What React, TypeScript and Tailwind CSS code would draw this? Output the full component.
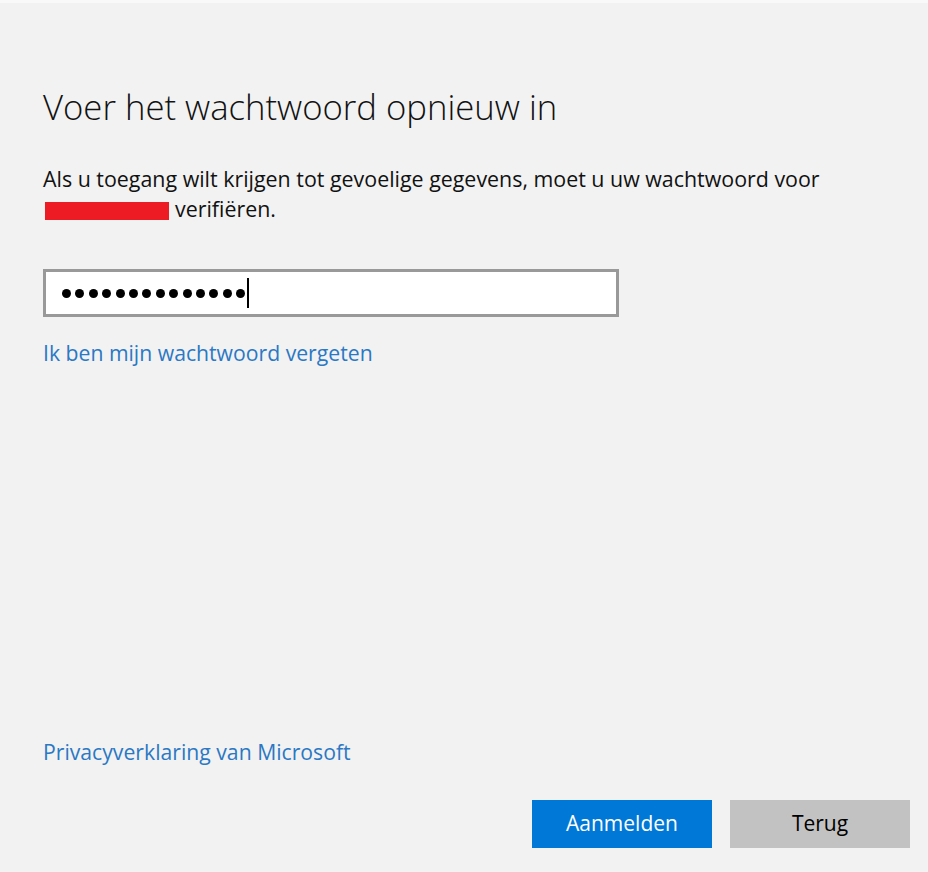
export default function App() {
  return (
    <main
      className="w-[928px] h-[872px] bg-[#f2f2f2] border-t-[3px] border-[#f9f9f9] flex flex-col px-[43px] pt-[80px] text-black"
      style={{ fontFamily: '"Open Sans", "Noto Sans", sans-serif' }}
    >
      {/* Title */}
      <h1 className="text-[34.7px] font-light leading-[48px] text-[#111]">Voer het wachtwoord opnieuw in</h1>

      {/* Description */}
      <p className="mt-[33px] text-[21.4px] leading-[30px] text-[#111]">
        Als u toegang wilt krijgen tot gevoelige gegevens, moet u uw wachtwoord voor
        <br />
        <span className="inline-block w-[124px] h-[18px] bg-[#ed1c24] align-[-3px] ml-[2px] mr-[6px]" />
        verifiëren.
      </p>

      {/* Password field */}
      <div className="mt-[45px] w-[576px] h-[48px] border-[3px] border-[#999999] bg-white flex items-center pl-[16px]">
        <div className="flex gap-[4.4px]">
          {Array.from({ length: 14 }).map((_, i) => (
            <span key={i} className="w-[9px] h-[9px] rounded-full bg-black" />
          ))}
        </div>
        <span className="w-[2px] h-[30px] bg-black ml-[2px]" />
      </div>

      <a href="#" className="mt-[21px] text-[21.2px] leading-[30px] text-[#2b78c4] self-start">
        Ik ben mijn wachtwoord vergeten
      </a>

      <div className="flex-1" />

      <a href="#" className="text-[21.2px] leading-[30px] text-[#2b78c4] self-start">
        Privacyverklaring van Microsoft
      </a>

      {/* Buttons */}
      <div className="mt-[33px] mb-[24px] flex justify-end gap-[18px] -mr-[25px]">
        <button className="w-[180px] h-[48px] bg-[#0078d7] text-white text-[21px]">Aanmelden</button>
        <button className="w-[180px] h-[48px] bg-[#c2c2c2] text-black text-[21px]">Terug</button>
      </div>
    </main>
  )
}
